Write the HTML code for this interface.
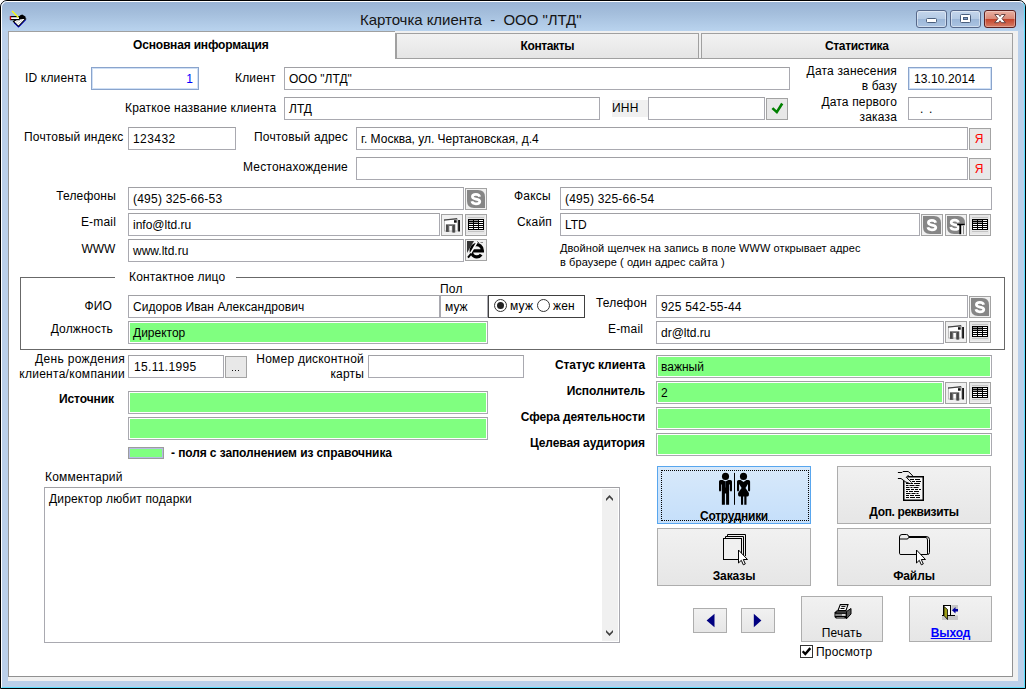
<!DOCTYPE html>
<html><head><meta charset="utf-8">
<style>
*{box-sizing:border-box;margin:0;padding:0}
html,body{width:1028px;height:691px;background:#fff;overflow:hidden}
body{font-family:"Liberation Sans",sans-serif;font-size:12px;color:#000;position:relative}
#win{position:absolute;left:0;top:0;width:1026px;height:689px;border:1px solid #000;border-radius:7px 7px 0 0;background:#bbd0ea;overflow:hidden}
#tgrad{position:absolute;left:0;top:0;width:1024px;height:30px;background:linear-gradient(#99b3d4 0,#a4bedc 40%,#b9d3ee 100%)}
#hl{position:absolute;left:0;top:0;width:1024px;height:687px;border:1px solid #fff;border-right-color:#5ce0ff;border-bottom-color:#5ce0ff;border-radius:6px 6px 0 0}
#title{position:absolute;left:359px;top:10px;font-size:15px;white-space:pre;line-height:17px;letter-spacing:-.04px;color:#151515}
#client{position:absolute;left:7px;top:30px;width:1010px;height:650px;background:#f0f0f0}
#page{position:absolute;left:0;top:27px;width:1005px;height:619px;background:#fff;border:1px solid #919191;border-top-color:#a0a0a0}
.tab{position:absolute;top:2px;height:26px;border:1px solid #a0a0a0;border-bottom-color:#989898;background:linear-gradient(#f2f2f2,#e5e5e5);font-weight:bold;line-height:25px;white-space:nowrap}
#tab0{position:absolute;left:0;top:0;width:387px;height:28px;background:#fff;border:1px solid #a0a0a0;border-bottom:none;border-right:none;font-weight:bold;line-height:27px;padding-left:124px;letter-spacing:-.176px;white-space:nowrap}
.a{position:absolute;white-space:nowrap;line-height:14px;letter-spacing:0.18px}
.r{text-align:right}
.b{font-weight:bold;letter-spacing:-.1px}
.in{position:absolute;height:23px;border:1px solid #a9a9b0;border-top-color:#a0a0a4;background:#fff;line-height:23px;padding-left:4px;white-space:nowrap;overflow:hidden;font-size:12px}
.g{background:#80ff80;box-shadow:inset 0 0 0 1px #fff}
.foc{border:1px solid #8aa4cc;box-shadow:inset 0 0 0 1px #cfe0f6}
.bt{position:absolute;width:22px;height:22px;margin-top:1px;border:1px solid #a3a3a3;background:#f0f0f0;overflow:hidden}
.chk,.ya,.dots{background:#e8e8e8}
.ya{color:#f00;text-align:center;line-height:20px;font-size:12px;padding-right:2px}
.rad{position:absolute;width:13px;height:13px;border:1px solid #333;border-radius:50%;background:#fff}
.rad i{position:absolute;left:2px;top:2px;width:7px;height:7px;border-radius:50%;background:#222}
.cb{position:absolute;top:10px;height:18px;border:1px solid #56688a;border-radius:3px;background:linear-gradient(#c4d6ec 0,#b4cae4 48%,#9cb7d8 52%,#abc4e2 100%);box-shadow:inset 0 0 0 1px rgba(255,255,255,.45)}
.cx{border-color:#5b2020;background:linear-gradient(#e9b0a2 0,#da8a78 48%,#c4442b 52%,#d67e68 100%);box-shadow:inset 0 0 0 1px rgba(255,255,255,.3)}
.big{position:absolute;border:1px solid #adadad;background:linear-gradient(#f1f1f1,#e6e6e6);text-align:center}
</style></head><body>
<div id="win">
<div id="tgrad"></div>
<div id="hl"></div>
<div id="title">Карточка клиента  -  ООО "ЛТД"</div>
<div id="client">
<div class="tab" style="left:387px;width:304px;border-left-width:2px;padding-left:123.500px;letter-spacing:-.38px">Контакты</div>
<div class="tab" style="left:693px;width:312px;padding-left:123px;letter-spacing:-.35px">Статистика</div>
<div id="page"></div>
<div id="tab0">Основная информация</div>
</div>
<div id="f" style="position:absolute;left:-1px;top:-1px;width:1028px;height:691px">
<div class="cb" style="left:916px;width:31px"><svg width="29" height="16" viewBox="0 0 29 16" style="position:absolute;left:0;top:0"><rect x="9.500" y="7.500" width="10" height="4" rx="1" fill="#fff" stroke="#4a5f7d"/></svg></div>
<div class="cb" style="left:950px;width:31px"><svg width="29" height="16" viewBox="0 0 29 16" style="position:absolute;left:0;top:0"><rect x="9.500" y="3.500" width="10" height="8" rx="1" fill="#fff" stroke="#4a5f7d"/><rect x="12.500" y="6.500" width="4" height="2" fill="#7f9cc4" stroke="#4a5f7d"/></svg></div>
<div class="cb cx" style="left:984px;width:32px"><svg width="30" height="16" viewBox="0 0 30 16" style="position:absolute;left:0;top:0"><path d="M9.800 3.500 H13.500 L15 5.500 L16.500 3.500 H20.200 L17 7.600 L20.400 11.700 H16.600 L15 9.700 L13.400 11.700 H9.600 L13 7.600Z" fill="#fff" stroke="#5a3a3a" stroke-width="0.9"/></svg></div>
<svg style="position:absolute;left:9px;top:9px" width="18" height="19" viewBox="0 0 18 19">
<path d="M4.500 12.500 L11 8 L16.500 10 L9.500 17.500Z" fill="#fff" stroke="#000" stroke-width="1.2"/>
<path d="M5 13.800 L9.600 18.200 L16.800 10.800" fill="none" stroke="#0000d0" stroke-width="1"/>
<path d="M1.500 7.600 H10.500 V10.600 H1.500Z" fill="#fff" stroke="#000" stroke-width="1.100"/>
<rect x="0.800" y="7.200" width="1.300" height="3.600" fill="#e00000"/>
<path d="M10.800 6.600 L13.200 5.600 L16.400 7.600 L16.800 9.600 L14 10 L11 10.600Z" fill="#000"/><path d="M6.500 13.500 L11.500 10.500 M8.500 15 L13 11.500" stroke="#bbb" stroke-width="0.800"/>
<path d="M3 2 L9.500 8.500" stroke="#ffff00" stroke-width="1.200"/>
</svg>
<!-- row 1 -->
<div class="a" style="left:25px;top:71px">ID клиента</div>
<div class="in foc r" style="left:91px;top:67px;width:108px;padding-right:5px;color:#00f">1</div>
<div class="a" style="left:235px;top:71px">Клиент</div>
<div class="in" style="left:284px;top:67px;width:506px">ООО "ЛТД"</div>
<div class="a r" style="left:760px;width:137px;top:64px">Дата занесения</div>
<div class="a r" style="left:760px;width:137px;top:79px">в базу</div>
<div class="in foc" style="left:908px;top:67px;width:84px;padding-left:5px;letter-spacing:.1px">13.10.2014</div>
<!-- row 2 -->
<div class="a" style="left:125px;top:101px">Краткое название клиента</div>
<div class="in" style="left:284px;top:97px;width:316px">ЛТД</div>
<div class="a" style="left:612px;top:100px;width:36px;height:17px;background:#f0f0f0;padding:1px 0 0 0">ИНН</div>
<div class="in" style="left:648px;top:97px;width:117px"></div>
<div class="bt chk" style="left:766px;top:97px"><svg width="20" height="20" viewBox="1 1 20 20" style="position:absolute;left:0;top:0"><path d="M6.400 10.100 L10.800 14.100 L16.200 5.500" fill="none" stroke="#008000" stroke-width="2.6"/></svg></div>
<div class="a r" style="left:760px;width:137px;top:95px">Дата первого</div>
<div class="a r" style="left:760px;width:137px;top:110px">заказа</div>
<div class="in" style="left:908px;top:97px;width:84px;padding-left:11px;letter-spacing:-.3px"> .&nbsp;&nbsp;.</div>
<!-- row 3 -->
<div class="a" style="left:24px;top:130px">Почтовый индекс</div>
<div class="in" style="left:128px;top:127px;width:108px;letter-spacing:.45px">123432</div>
<div class="a" style="left:254px;top:130px">Почтовый адрес</div>
<div class="in" style="left:356px;top:127px;width:612px">г. Москва, ул. Чертановская, д.4</div>
<div class="bt ya" style="left:969px;top:127px">Я</div>
<div class="a" style="left:243px;top:160px">Местонахождение</div>
<div class="in" style="left:356px;top:157px;width:612px"></div>
<div class="bt ya" style="left:969px;top:157px">Я</div>
<!-- phones -->
<div class="a r" style="left:20px;width:96px;top:189px">Телефоны</div>
<div class="in" style="left:128px;top:187px;width:336px;letter-spacing:.22px">(495) 325-66-53</div>
<div class="bt sk" style="left:465px;top:187px"><svg width="20" height="20" viewBox="1 1 20 20" style="position:absolute;left:0;top:0"><path d="M2 2 H13 Q20 2 20 9 V20 H9 Q2 20 2 13 Z" fill="#868686"/><path d="M14.600 8.800 Q14.200 6.400 10.900 6.400 Q7.400 6.400 7.400 8.800 Q7.400 10.500 10.900 11.100 Q14.800 11.700 14.800 13.500 Q14.800 15.800 10.900 15.800 Q7.400 15.800 6.900 13.300" fill="none" stroke="#fff" stroke-width="2.700" stroke-linecap="butt"/></svg></div>
<div class="a r" style="left:20px;width:96px;top:215px">E-mail</div>
<div class="in" style="left:128px;top:213px;width:312px">info@ltd.ru</div>
<div class="bt bk" style="left:441px;top:213px"><svg width="20" height="20" viewBox="1 1 20 20" style="position:absolute;left:0;top:0"><rect x="3.500" y="5.500" width="13" height="11.500" fill="#fff" stroke="#b0b0b0" stroke-width="0.800"/><path d="M3 5.400 L16.200 3.900 V5.300 L3 6.700Z" fill="#444"/><rect x="13" y="6.200" width="2.700" height="2.500" fill="#111"/><rect x="17.200" y="6" width="1.700" height="11.500" fill="#000"/><path d="M4.900 10.200 H14.300 V18.600 H10.900 V12 H8.300 V18 H4.900Z" fill="#6a6a6a"/><path d="M6 11 V17.600 M12.900 11 V18.400" stroke="#383838" stroke-width="1.200"/></svg></div>
<div class="bt tb" style="left:465px;top:213px"><svg width="20" height="20" viewBox="1 1 20 20" style="position:absolute;left:0;top:0"><rect x="0" y="0" width="20" height="20" fill="#e6e6e6"/><rect x="3" y="3" width="16" height="1" fill="#c4c4c4"/><rect x="3" y="17" width="16" height="1" fill="#c4c4c4"/><rect x="3" y="5" width="16" height="11" fill="#000"/><rect x="4" y="6" width="4" height="1" fill="#9a9a9a"/><rect x="9" y="6" width="4" height="1" fill="#9a9a9a"/><rect x="14" y="6" width="4" height="1" fill="#fff"/><rect x="4" y="8" width="4" height="1" fill="#9a9a9a"/><rect x="9" y="8" width="4" height="1" fill="#9a9a9a"/><rect x="14" y="8" width="4" height="1" fill="#fff"/><rect x="4" y="10" width="4" height="1" fill="#fff"/><rect x="9" y="10" width="4" height="1" fill="#fff"/><rect x="14" y="10" width="4" height="1" fill="#fff"/><rect x="4" y="12" width="4" height="1" fill="#fff"/><rect x="9" y="12" width="4" height="1" fill="#fff"/><rect x="14" y="12" width="4" height="1" fill="#fff"/><rect x="4" y="14" width="4" height="1" fill="#fff"/><rect x="9" y="14" width="4" height="1" fill="#fff"/><rect x="14" y="14" width="4" height="1" fill="#fff"/></svg></div>
<div class="a" style="left:81.500px;top:242px;letter-spacing:-.1px">WWW</div>
<div class="in" style="left:128px;top:239px;width:336px">www.ltd.ru</div>
<div class="bt ie" style="left:465px;top:239px;margin-top:0"><svg width="20" height="20" viewBox="1 1 20 20" style="position:absolute;left:0;top:0"><path d="M2 2 H9 L2 14Z" fill="#333"/><path d="M6.6 11.8 H17.4 A5.6 6.2 0 1 0 16.2 15.6" fill="none" stroke="#000" stroke-width="3.2"/><path d="M3.4 18 L13 1.6" stroke="#fff" stroke-width="1.6"/><path d="M3 18.6 L6.2 14.6" stroke="#000" stroke-width="2"/><path d="M12.5 2.5 L14 4.5" stroke="#222" stroke-width="1"/><path d="M15.5 3.5 H18" stroke="#888" stroke-width="1"/></svg></div>
<div class="a" style="left:514px;top:189px">Факсы</div>
<div class="in" style="left:560px;top:187px;width:432px;letter-spacing:.22px">(495) 325-66-54</div>
<div class="a" style="left:517px;top:215px">Скайп</div>
<div class="in" style="left:560px;top:213px;width:360px">LTD</div>
<div class="bt sk" style="left:921px;top:213px"><svg width="20" height="20" viewBox="1 1 20 20" style="position:absolute;left:0;top:0"><path d="M2 2 H13 Q20 2 20 9 V20 H9 Q2 20 2 13 Z" fill="#868686"/><path d="M14.600 8.800 Q14.200 6.400 10.900 6.400 Q7.400 6.400 7.400 8.800 Q7.400 10.500 10.900 11.100 Q14.800 11.700 14.800 13.500 Q14.800 15.800 10.900 15.800 Q7.400 15.800 6.900 13.300" fill="none" stroke="#fff" stroke-width="2.700" stroke-linecap="butt"/></svg></div>
<div class="bt sk2" style="left:945px;top:213px"><svg width="20" height="20" viewBox="1 1 20 20" style="position:absolute;left:0;top:0"><path d="M2 2 H13 Q20 2 20 9 V20 H9 Q2 20 2 13 Z" fill="#868686"/><g transform="translate(-1.2,-0.3)"><path d="M14.600 8.800 Q14.200 6.400 10.900 6.400 Q7.400 6.400 7.400 8.800 Q7.400 10.500 10.900 11.100 Q14.800 11.700 14.800 13.500 Q14.800 15.800 10.900 15.800 Q7.400 15.800 6.900 13.300" fill="none" stroke="#fff" stroke-width="2.700" stroke-linecap="butt"/></g><rect x="16" y="11" width="4.500" height="9.500" fill="#f4f4f4"/><rect x="12.200" y="9.800" width="7.400" height="1.500" fill="#000"/><rect x="14.400" y="10" width="1.800" height="10.200" fill="#000"/><rect x="18" y="12" width="1" height="8.200" fill="#8a8a8a"/></svg></div>
<div class="bt tb" style="left:969px;top:213px"><svg width="20" height="20" viewBox="1 1 20 20" style="position:absolute;left:0;top:0"><rect x="0" y="0" width="20" height="20" fill="#e6e6e6"/><rect x="3" y="3" width="16" height="1" fill="#c4c4c4"/><rect x="3" y="17" width="16" height="1" fill="#c4c4c4"/><rect x="3" y="5" width="16" height="11" fill="#000"/><rect x="4" y="6" width="4" height="1" fill="#9a9a9a"/><rect x="9" y="6" width="4" height="1" fill="#9a9a9a"/><rect x="14" y="6" width="4" height="1" fill="#fff"/><rect x="4" y="8" width="4" height="1" fill="#9a9a9a"/><rect x="9" y="8" width="4" height="1" fill="#9a9a9a"/><rect x="14" y="8" width="4" height="1" fill="#fff"/><rect x="4" y="10" width="4" height="1" fill="#fff"/><rect x="9" y="10" width="4" height="1" fill="#fff"/><rect x="14" y="10" width="4" height="1" fill="#fff"/><rect x="4" y="12" width="4" height="1" fill="#fff"/><rect x="9" y="12" width="4" height="1" fill="#fff"/><rect x="14" y="12" width="4" height="1" fill="#fff"/><rect x="4" y="14" width="4" height="1" fill="#fff"/><rect x="9" y="14" width="4" height="1" fill="#fff"/><rect x="14" y="14" width="4" height="1" fill="#fff"/></svg></div>
<div class="a" style="left:560px;top:241px;font-size:11px;letter-spacing:.08px">Двойной щелчек на запись в поле WWW открывает адрес</div>
<div class="a" style="left:560px;top:255px;font-size:11px;letter-spacing:.08px">в браузере ( один адрес сайта )</div>
<!-- group -->
<div style="position:absolute;left:20px;top:277px;width:985px;height:73px;border:1px solid #686868"></div>
<div class="a" style="left:115px;top:270px;width:121px;background:#fff;padding-left:14px">Контактное лицо</div>
<div class="a" style="left:440px;top:282px">Пол</div>
<div class="a r" style="left:20px;width:92px;top:299px">ФИО</div>
<div class="in" style="left:128px;top:295px;width:312px;letter-spacing:.06px">Сидоров Иван Александрович</div>
<div class="in" style="left:440px;top:295px;width:48px">муж</div>
<div style="position:absolute;left:488px;top:295px;width:97px;height:23px;border:1px solid #404040;background:#fff"></div>
<div class="rad" style="left:494px;top:299px"><i></i></div>
<div class="rad" style="left:537px;top:299px"></div>
<div class="a" style="left:510px;top:299px">муж</div>
<div class="a" style="left:553px;top:299px">жен</div>
<div class="a" style="left:596px;top:296px">Телефон</div>
<div class="in" style="left:656px;top:295px;width:312px;letter-spacing:.2px">925 542-55-44</div>
<div class="bt sk" style="left:969px;top:295px"><svg width="20" height="20" viewBox="1 1 20 20" style="position:absolute;left:0;top:0"><path d="M2 2 H13 Q20 2 20 9 V20 H9 Q2 20 2 13 Z" fill="#868686"/><path d="M14.600 8.800 Q14.200 6.400 10.900 6.400 Q7.400 6.400 7.400 8.800 Q7.400 10.500 10.900 11.100 Q14.800 11.700 14.800 13.500 Q14.800 15.800 10.900 15.800 Q7.400 15.800 6.900 13.300" fill="none" stroke="#fff" stroke-width="2.700" stroke-linecap="butt"/></svg></div>
<div class="a r" style="left:20px;width:93px;top:322px">Должность</div>
<div class="in g" style="left:128px;top:321px;width:360px">Директор</div>
<div class="a" style="left:608px;top:322px">E-mail</div>
<div class="in" style="left:656px;top:321px;width:288px">dr@ltd.ru</div>
<div class="bt bk" style="left:945px;top:321px;margin-top:0"><svg width="20" height="20" viewBox="1 1 20 20" style="position:absolute;left:0;top:0"><rect x="3.500" y="5.500" width="13" height="11.500" fill="#fff" stroke="#b0b0b0" stroke-width="0.800"/><path d="M3 5.400 L16.200 3.900 V5.300 L3 6.700Z" fill="#444"/><rect x="13" y="6.200" width="2.700" height="2.500" fill="#111"/><rect x="17.200" y="6" width="1.700" height="11.500" fill="#000"/><path d="M4.900 10.200 H14.300 V18.600 H10.900 V12 H8.300 V18 H4.900Z" fill="#6a6a6a"/><path d="M6 11 V17.600 M12.900 11 V18.400" stroke="#383838" stroke-width="1.200"/></svg></div>
<div class="bt tb" style="left:969px;top:321px;margin-top:0"><svg width="20" height="20" viewBox="1 1 20 20" style="position:absolute;left:0;top:0"><rect x="0" y="0" width="20" height="20" fill="#e6e6e6"/><rect x="3" y="3" width="16" height="1" fill="#c4c4c4"/><rect x="3" y="17" width="16" height="1" fill="#c4c4c4"/><rect x="3" y="5" width="16" height="11" fill="#000"/><rect x="4" y="6" width="4" height="1" fill="#9a9a9a"/><rect x="9" y="6" width="4" height="1" fill="#9a9a9a"/><rect x="14" y="6" width="4" height="1" fill="#fff"/><rect x="4" y="8" width="4" height="1" fill="#9a9a9a"/><rect x="9" y="8" width="4" height="1" fill="#9a9a9a"/><rect x="14" y="8" width="4" height="1" fill="#fff"/><rect x="4" y="10" width="4" height="1" fill="#fff"/><rect x="9" y="10" width="4" height="1" fill="#fff"/><rect x="14" y="10" width="4" height="1" fill="#fff"/><rect x="4" y="12" width="4" height="1" fill="#fff"/><rect x="9" y="12" width="4" height="1" fill="#fff"/><rect x="14" y="12" width="4" height="1" fill="#fff"/><rect x="4" y="14" width="4" height="1" fill="#fff"/><rect x="9" y="14" width="4" height="1" fill="#fff"/><rect x="14" y="14" width="4" height="1" fill="#fff"/></svg></div>
<!-- below -->
<div class="a r" style="left:0;width:125px;top:352px;letter-spacing:.32px">День рождения</div>
<div class="a r" style="left:0;width:125px;top:367px;letter-spacing:.28px">клиента/компании</div>
<div class="in" style="left:128px;top:355px;width:96px;padding-left:5px;letter-spacing:.33px">15.11.1995</div>
<div class="bt dots" style="left:225px;top:355px"><svg width="20" height="20" viewBox="0 0 20 20" style="position:absolute;left:0;top:0" shape-rendering="crispEdges"><rect x="6" y="13" width="1" height="1" fill="#111"/><rect x="9" y="13" width="1" height="1" fill="#111"/><rect x="12" y="13" width="1" height="1" fill="#111"/></svg></div>
<div class="a r" style="left:240px;width:124px;top:352px;letter-spacing:.22px">Номер дисконтной</div>
<div class="a r" style="left:240px;width:124px;top:367px">карты</div>
<div class="in" style="left:368px;top:355px;width:156px"></div>
<div class="a r b" style="left:500px;width:145px;top:358px">Статус клиента</div>
<div class="in g" style="left:656px;top:355px;width:336px">важный</div>
<div class="a r b" style="left:500px;width:145px;top:384px">Исполнитель</div>
<div class="in g" style="left:656px;top:381px;width:288px">2</div>
<div class="bt bk" style="left:945px;top:381px"><svg width="20" height="20" viewBox="1 1 20 20" style="position:absolute;left:0;top:0"><rect x="3.500" y="5.500" width="13" height="11.500" fill="#fff" stroke="#b0b0b0" stroke-width="0.800"/><path d="M3 5.400 L16.200 3.900 V5.300 L3 6.700Z" fill="#444"/><rect x="13" y="6.200" width="2.700" height="2.500" fill="#111"/><rect x="17.200" y="6" width="1.700" height="11.500" fill="#000"/><path d="M4.900 10.200 H14.300 V18.600 H10.900 V12 H8.300 V18 H4.900Z" fill="#6a6a6a"/><path d="M6 11 V17.600 M12.900 11 V18.400" stroke="#383838" stroke-width="1.200"/></svg></div>
<div class="bt tb" style="left:969px;top:381px"><svg width="20" height="20" viewBox="1 1 20 20" style="position:absolute;left:0;top:0"><rect x="0" y="0" width="20" height="20" fill="#e6e6e6"/><rect x="3" y="3" width="16" height="1" fill="#c4c4c4"/><rect x="3" y="17" width="16" height="1" fill="#c4c4c4"/><rect x="3" y="5" width="16" height="11" fill="#000"/><rect x="4" y="6" width="4" height="1" fill="#9a9a9a"/><rect x="9" y="6" width="4" height="1" fill="#9a9a9a"/><rect x="14" y="6" width="4" height="1" fill="#fff"/><rect x="4" y="8" width="4" height="1" fill="#9a9a9a"/><rect x="9" y="8" width="4" height="1" fill="#9a9a9a"/><rect x="14" y="8" width="4" height="1" fill="#fff"/><rect x="4" y="10" width="4" height="1" fill="#fff"/><rect x="9" y="10" width="4" height="1" fill="#fff"/><rect x="14" y="10" width="4" height="1" fill="#fff"/><rect x="4" y="12" width="4" height="1" fill="#fff"/><rect x="9" y="12" width="4" height="1" fill="#fff"/><rect x="14" y="12" width="4" height="1" fill="#fff"/><rect x="4" y="14" width="4" height="1" fill="#fff"/><rect x="9" y="14" width="4" height="1" fill="#fff"/><rect x="14" y="14" width="4" height="1" fill="#fff"/></svg></div>
<div class="a r b" style="left:500px;width:145px;top:410px">Сфера деятельности</div>
<div class="in g" style="left:656px;top:407px;width:336px"></div>
<div class="a r b" style="left:500px;width:145px;top:436px">Целевая аудитория</div>
<div class="in g" style="left:656px;top:433px;width:336px"></div>
<div class="a b" style="left:59px;top:392px">Источник</div>
<div class="in g" style="left:128px;top:391px;width:360px"></div>
<div class="in g" style="left:128px;top:417px;width:360px"></div>
<div class="in g" style="left:128px;top:447px;width:36px;height:12px;box-shadow:inset 0 0 0 1px #b6bbe4;border-color:#9c9c9c"></div>
<div class="a b" style="left:171px;top:446px">- поля с заполнением из справочника</div>
<div class="a" style="left:45px;top:470px">Комментарий</div>
<div class="in" style="left:44px;top:487px;width:576px;height:156px;line-height:14px;padding-top:4px;letter-spacing:.16px">Директор любит подарки</div>
<div id="sb" style="position:absolute;left:602px;top:489px;width:16px;height:152px;background:#f0f0f0"><svg width="16" height="152" viewBox="0 0 16 152"><path d="M7.500 6 L11 9.800 V12 L7.500 8.400 L4 12 V9.800Z" fill="#404040"/><path d="M4 141 V143.200 L7.500 147 L11 143.200 V141 L7.500 144.600Z" fill="#404040"/></svg></div>
<!-- big buttons -->
<div class="big" style="left:657px;top:466px;width:154px;height:58px;background:linear-gradient(#d8e9fa,#c5dffa);border-color:#58a6ee"></div>
<div class="a b" style="left:657px;width:154px;text-align:center;top:509px;letter-spacing:-.28px">Сотрудники</div>
<div class="big" style="left:837px;top:466px;width:154px;height:58px"></div>
<div class="a b" style="left:837px;width:154px;text-align:center;top:505px;letter-spacing:-.34px">Доп. реквизиты</div>
<div class="big" style="left:657px;top:528px;width:154px;height:58px"></div>
<div class="a b" style="left:657px;width:154px;text-align:center;top:569px">Заказы</div>
<div class="big" style="left:837px;top:528px;width:154px;height:58px"></div>
<div class="a b" style="left:837px;width:154px;text-align:center;top:569px">Файлы</div>
<div class="big" style="left:693px;top:608px;width:34px;height:25px"></div>
<div class="big" style="left:741px;top:608px;width:34px;height:25px"></div>
<div class="big" style="left:801px;top:596px;width:82px;height:46px"></div>
<div class="a" style="left:801px;width:82px;text-align:center;top:626px">Печать</div>
<div class="big" style="left:909px;top:596px;width:83px;height:46px"></div>
<div class="a b" style="left:909px;width:83px;text-align:center;top:626px;color:#0000ff;text-decoration:underline">Выход</div>
<svg style="position:absolute;left:718px;top:472px" width="34" height="34" viewBox="0 0 34 34">
<circle cx="7.500" cy="4.400" r="3.550" fill="#000"/>
<path d="M2.600 7.900 H12.400 Q14 7.900 14 9.600 V18.600 L13 19.800 L11.800 18.600 V12.400 H11.100 V32.700 H8.100 V21.500 H6.900 V32.700 H3.850 V12.400 H3.200 V18.600 L2 19.800 L1 18.600 V9.600 Q1 7.900 2.600 7.900Z" fill="#000"/>
<path d="M4.600 7.900 L7.500 9.400 L10.400 7.900Z" fill="#dcebfa"/>
<path d="M7.500 9.400 V15.500" stroke="#3a4a5c" stroke-width="0.700"/>
<rect x="16" y="0.900" width="1" height="31.900" fill="#000"/>
<circle cx="25.500" cy="4.400" r="3.550" fill="#000"/>
<path d="M20.600 7.900 H30.400 Q32.100 7.900 32.100 9.600 V18.600 L31.100 19.800 L30 18.600 V12 L27.500 16 L30.900 21 Q31.200 24.500 29.500 24.500 H28.500 V32.700 H26.300 V24.500 H25.100 V32.700 H23 V24.500 H21.500 Q19.800 24.500 20.100 21 L23.600 16 L21.100 12 V18.600 L20 19.800 L19 18.600 V9.600 Q19 7.900 20.600 7.900Z" fill="#000"/>
<path d="M22.600 7.900 L25.500 10 L28.400 7.900Z" fill="#dcebfa"/>
</svg><div style="position:absolute;left:661px;top:470px;width:148px;height:51px;border:1px dotted #000"></div><svg style="position:absolute;left:897px;top:470px" width="30" height="32" viewBox="0 0 30 32">
<rect x="6.750" y="6.750" width="19.500" height="23.500" fill="#f6f6f6" stroke="#000" stroke-width="1.500"/>
<path d="M9 9.5 H24" stroke="#000" stroke-width="1" stroke-dasharray="3 1 4 1 5 9"/><path d="M9 11.5 H24" stroke="#000" stroke-width="1" stroke-dasharray="2 1 2 1 3 1 5 9"/><path d="M9 13.5 H24" stroke="#000" stroke-width="1" stroke-dasharray="3 1 3 1 6 9"/><path d="M9 15.5 H24" stroke="#000" stroke-width="1" stroke-dasharray="2.5 1 5 1 4 9"/><path d="M9 17.5 H24" stroke="#000" stroke-width="1" stroke-dasharray="3.5 1 2 1 5 9"/><path d="M9 19.5 H24" stroke="#000" stroke-width="1" stroke-dasharray="4 1 3 1 3 1 3 9"/><path d="M9 21.5 H24" stroke="#000" stroke-width="1" stroke-dasharray="2 1 4 1 5 9"/><path d="M9 23.5 H24" stroke="#000" stroke-width="1" stroke-dasharray="4.5 1 4 1 2 9"/><path d="M9 25.5 H24" stroke="#000" stroke-width="1" stroke-dasharray="3 1 4 1 5 9"/><path d="M9 27.5 H24" stroke="#000" stroke-width="1" stroke-dasharray="3 1 5 1 4 9"/>
<path d="M0.900 2.500 H5 L6 1.500 H11.200 L13 3 L15.800 6 H11.300 L9.200 7.300 L14.500 12.400 L13 13.700 L8.700 12 L4 8.500 H0.900Z" fill="#efefef"/>
<path d="M0.900 2.500 H5 L6 1.500 H11.200 L13 3 L15.800 6" fill="none" stroke="#000" stroke-width="1"/>
<path d="M11.600 5 L9.300 7.300 L14.600 12.400" fill="none" stroke="#000" stroke-width="1"/>
<path d="M0.900 8.500 H4 L8.700 12 L13 13.700" fill="none" stroke="#000" stroke-width="1"/>
</svg><svg style="position:absolute;left:722px;top:533px" width="28" height="34" viewBox="0 0 28 34">
<path d="M5.5 3 V1.5 H23.5 V23" fill="none" stroke="#000"/>
<path d="M3.5 5 V3.5 H21.5 V25" fill="none" stroke="#000"/>
<rect x="1.5" y="5.500" width="18" height="21" fill="#f0f0f0" stroke="#000"/>
<path d="M16.5 17 V30 L19.3 27.3 L21.3 31.8 L23.3 30.9 L21.3 26.5 H25.5Z" fill="#fff" stroke="#000" stroke-width="1"/>
</svg><svg style="position:absolute;left:898px;top:533px" width="34" height="34" viewBox="0 0 34 34">
<path d="M1.500 20.500 V4 Q1.500 1.500 4 1.500 H8.500 Q10.500 1.500 10.500 3.500 H28 Q31.500 3.500 31.500 6.500 V19.500 Q31.500 21.500 29.500 21.500 H3 Q1.500 21.500 1.500 20.500Z" fill="none" stroke="#000"/>
<path d="M1.500 6 H9 Q10.500 6 10.500 4.500 H28 Q29.500 5 29.500 7 V21" fill="none" stroke="#000"/>
<path d="M18.500 17 V30 L21.300 27.300 L23.300 31.800 L25.300 30.900 L23.300 26.500 H27.500Z" fill="#fff" stroke="#000" stroke-width="1"/>
</svg><svg style="position:absolute;left:693px;top:608px" width="34" height="25" viewBox="0 0 34 25"><path d="M13.600 12.500 L21.500 5.800 V19.200Z" fill="#000080"/></svg><svg style="position:absolute;left:741px;top:608px" width="34" height="25" viewBox="0 0 34 25"><path d="M20.400 12.500 L12.800 5.800 V19.200Z" fill="#000080"/></svg><svg style="position:absolute;left:834px;top:604px" width="18" height="16" viewBox="0 0 18 16">
<path d="M12.500 7.500 L17 4.500 V10 L12.500 14.800Z" fill="#555" stroke="#000"/>
<path d="M0.500 8.500 L2.500 6.500 H12.500 V14.500 H2 L0.500 13Z" fill="#000"/>
<rect x="1.300" y="9.800" width="10.700" height="2.200" fill="#808080"/>
<rect x="8" y="10.300" width="3" height="1.200" fill="#fff"/>
<rect x="2.500" y="7.600" width="9.500" height="0.800" fill="#888"/>
<rect x="2.500" y="13" width="8" height="0.800" fill="#888"/>
<path d="M6.300 0.600 H14 L12 6.500 H4Z" fill="#fff" stroke="#000" stroke-width="1.100"/>
<path d="M7.300 2.600 H11.500 M6.500 4.500 H10.500" stroke="#000" stroke-width="1"/>
</svg><svg style="position:absolute;left:942px;top:605px" width="16" height="15" viewBox="0 0 16 15">
<rect x="9.500" y="0" width="6.500" height="6" fill="#c6c6c6"/>
<rect x="0" y="10.500" width="16" height="4.500" fill="#c6c6c6"/>
<rect x="1.500" y="0.500" width="7" height="10" fill="#fff" stroke="#000"/>
<rect x="0" y="10" width="13" height="1" fill="#000"/>
<path d="M2 1.500 L5.500 4.500 V14.500 L2 10.500Z" fill="#a0a018" stroke="#000" stroke-width="0.8"/>
<path d="M10 5.300 L13.500 2 V4 H16 V6.600 H13.500 V8.600Z" fill="#0000a0"/>
</svg>
<div style="position:absolute;left:800px;top:645px;width:13px;height:13px;border:1px solid #333;background:#fff"></div><svg style="position:absolute;left:800px;top:645px" width="13" height="13" viewBox="0 0 13 13"><path d="M2.700 6.200 L5.300 9 L10.300 3.100" fill="none" stroke="#000" stroke-width="2.400"/></svg>
<div class="a" style="left:816px;top:645px">Просмотр</div>
</div>
</div>
</body></html>
